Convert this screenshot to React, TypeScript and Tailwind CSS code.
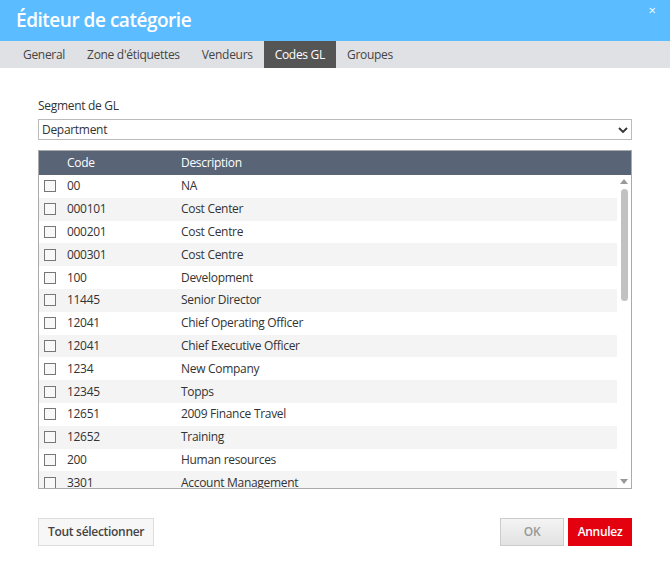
import React from "react";

const rows: [string, string][] = [
  ["00", "NA"], ["000101", "Cost Center"], ["000201", "Cost Centre"], ["000301", "Cost Centre"],
  ["100", "Development"], ["11445", "Senior Director"], ["12041", "Chief Operating Officer"],
  ["12041", "Chief Executive Officer"], ["1234", "New Company"], ["12345", "Topps"],
  ["12651", "2009 Finance Travel"], ["12652", "Training"], ["200", "Human resources"],
  ["3301", "Account Management"],
];

export default function App() {
  return (
    <div className="w-[670px] h-[564px] bg-white text-[12px] text-[#333] overflow-hidden" style={{ fontFamily: '"Open Sans", sans-serif' }}>
      <div className="relative h-[41px] bg-[#5bbcff] flex items-center pl-4">
        <span className="text-white text-[19px] font-semibold tracking-tight">Éditeur de catégorie</span>
        <span className="absolute right-[14px] top-[1px] text-white text-[13px]">×</span>
      </div>
      <div className="h-[27px] bg-[#e0e1e4] flex pl-[12px] tracking-tight">
        {["General", "Zone d'étiquettes", "Vendeurs", "Codes GL", "Groupes"].map((t) => (
          <div key={t} className={`px-[11px] flex items-center ${t === "Codes GL" ? "bg-[#555555] text-white" : "text-[#444]"}`}>{t}</div>
        ))}
      </div>
      <div className="px-[38px] pt-[29px] tracking-tight">
        <div className="mb-[4px]">Segment de GL</div>
        <div className="h-[21px] border border-[#bbb] flex items-center justify-between px-[3px]">
          <span>Department</span>
          <svg width="10" height="8" viewBox="0 0 10 8"><path d="M1 2l4 4 4-4" stroke="#333" strokeWidth="1.8" fill="none" /></svg>
        </div>
        <div className="mt-[10px] border border-[#aaa] h-[339px] flex flex-col overflow-hidden">
          <div className="h-[24px] bg-[#596477] text-white flex items-center shrink-0">
            <span className="w-[142px] pl-[28px]">Code</span>
            <span>Description</span>
          </div>
          <div className="flex flex-1 overflow-hidden">
            <div className="flex-1">
              {rows.map(([c, d], i) => (
                <div key={i} className={`h-[22.8px] flex items-center ${i % 2 ? "bg-[#f4f4f4]" : "bg-white"}`}>
                  <span className="ml-[5px] w-[12px] h-[12px] border border-[#777] bg-[#f8f8f8]" />
                  <span className="w-[114px] ml-[11px]">{c}</span>
                  <span>{d}</span>
                </div>
              ))}
            </div>
            <div className="w-[14px] flex flex-col items-center bg-white">
              <svg width="8" height="6" className="mt-[4px]"><path d="M0 5h8L4 0z" fill="#999" /></svg>
              <div className="w-[7px] h-[112px] rounded bg-[#c2c2c2] mt-[4px]" />
              <div className="flex-1" />
              <svg width="8" height="6" className="mb-[3px]"><path d="M0 0h8L4 5z" fill="#999" /></svg>
            </div>
          </div>
        </div>
        <div className="mt-[29px] flex items-center justify-between font-semibold">
          <div className="h-[28px] px-[9px] flex items-center border border-[#ddd] bg-[#f7f7f7] text-[#444]">Tout sélectionner</div>
          <div className="flex gap-[4px]">
            <div className="h-[28px] w-[64px] flex items-center justify-center border border-[#ccc] bg-gradient-to-b from-[#f4f4f4] to-[#e2e2e2] text-[#999]">OK</div>
            <div className="h-[28px] w-[64px] flex items-center justify-center bg-[#e3000f] text-white">Annulez</div>
          </div>
        </div>
      </div>
    </div>
  );
}
